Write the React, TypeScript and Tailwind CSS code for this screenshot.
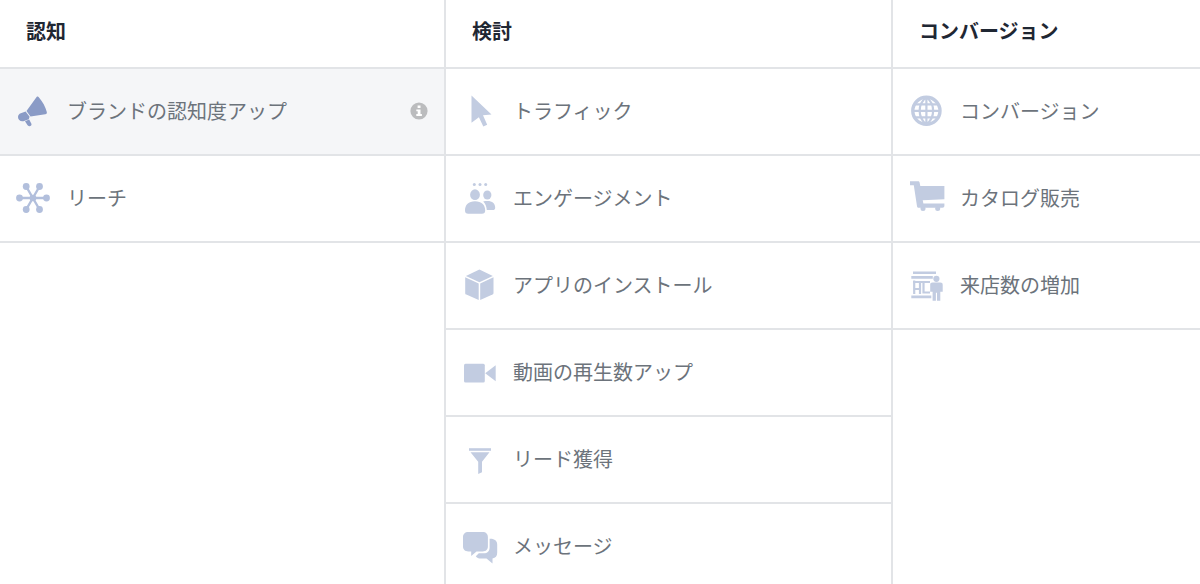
import { useState, type ReactNode } from "react";
import clsx from "clsx";

interface Objective {
  id: string;
  label: string;
  icon: ReactNode;
  hint?: string;
}

interface Column {
  title: string;
  items: Objective[];
}

const megaphone = (
  <>
    <path d="M20.6 3.9c.7-.6 1.6-.5 2.200.3 3.700 4.400 6.800 9.600 8 14.800.3 1.300-.2 2.100-1.500 2.200l-14.800 2.200-4-5.400z" />
    <path d="m9.600 18.400 4 5.300-.8 2.500-5.300 2c-2.900.8-5.500-1.300-5.500-4.100 0-1.900 1.100-3.400 2.800-3.900z" />
    <path d="m9 28.200 4.200-1.600 2.200 4.200c.5 1.400-.6 2.600-2.200 2.500-.8-.1-1.400-.5-1.800-1.200z" />
  </>
);

const hub = (
  <g className="text-[#b2bfdc]" fill="currentColor">
    <path d="M3.5 18h27M10.200 6.500l13.300 23M23.500 6.500l-13.300 23" stroke="currentColor" strokeWidth="2.400" />
    <circle cx="17" cy="18" r="3.300" />
    <circle cx="3.500" cy="18" r="3.400" />
    <circle cx="30.500" cy="18" r="3.400" />
    <circle cx="10.200" cy="6.500" r="3.400" />
    <circle cx="23.500" cy="6.500" r="3.400" />
    <circle cx="10.200" cy="29.500" r="3.400" />
    <circle cx="23.500" cy="29.500" r="3.400" />
  </g>
);

const cursor = <path d="M9.500 2.500 29.500 21.600l-8.500.6 4.200 9.500-3.900 1.800-4.400-9.300-7.400 5.500z" />;

const people = (
  <>
    <circle cx="12.300" cy="4.400" r="1.500" />
    <circle cx="18" cy="4.400" r="1.500" />
    <circle cx="23.700" cy="4.400" r="1.500" />
    <ellipse cx="13" cy="14.700" rx="4.900" ry="5.400" />
    <path d="M3 30.500c0-5.500 3.500-9.200 10-9.200s10.200 3.700 10.200 9.200c0 2.200-1.200 3.200-3.200 3.200H6.200c-2 0-3.200-1-3.200-3.200z" />
    <ellipse cx="25.300" cy="15" rx="4.100" ry="4.500" />
    <path d="M21.200 21.500c1.200-.5 2.600-.6 4.200-.6 5 0 7.800 2.700 7.800 6.800 0 1.700-.9 2.400-2.500 2.400h-5.900c-.3-3.600-1.300-6.600-3.600-8.600z" />
  </>
);

const cube = (
  <>
    <path d="M17.400 2.500 30.800 9 17.400 15.200 3.900 9z" />
    <path d="M3.200 10.300 16.700 16.400v16.700L4.300 27.600c-.8-.4-1.100-.9-1.100-1.700z" />
    <path d="M31.500 10.300 18.200 16.400v16.700L30.500 27.600c.7-.4 1-.9 1-1.700z" />
  </>
);

const video = (
  <>
    <rect x="2" y="9.800" width="20.800" height="18.800" rx="1.500" />
    <path d="m23.200 19.200 10.500-8v16z" />
  </>
);

const funnel = (
  <>
    <path d="M7 7.200h22v2.600H7z" />
    <path d="M8.500 11.300h19l-7.500 9.500v10.400L16.200 33V20.800z" />
  </>
);

const chat = (
  <>
    <path d="M6.300 4h14.400c3.300 0 5.200 2 5.200 5.200v9c0 3.200-1.900 5.200-5.200 5.200h-6.200L9.200 28v-4.600H6.300C3 23.400 1 21.400 1 18.200v-9C1 6 3 4 6.300 4z" />
    <path d="M27.600 10.800c4.900-.3 7.600 2 7.600 5.700v8.200c0 3.300-1.700 5.300-4.700 5.700v5l-6-4.800h-5.700c-2.300 0-4-.9-5-2.400l3-2.900h5c3.600 0 5.800-2.300 5.800-5.900z" />
  </>
);

const globe = (
  <g fill="none" stroke="currentColor">
    <circle cx="17.400" cy="17.800" r="13.600" strokeWidth="3.400" />
    <path
      d="M17.400 4v27.600M4 17.800h26.800M6 11.300h22.800M6 24.300h22.800M17.400 4c-9 7.300-9 20.300 0 27.600M17.400 4c9 7.300 9 20.300 0 27.600"
      strokeWidth="2.200"
    />
  </g>
);

const cart = (
  <>
    <path d="M1 1.300h8c.9 0 1.400.4 1.600 1.300l.7 3.400h24.100v13.200l-21.700 1.100.7 3.200h21v2.200c0 1.300-.7 2-2 2H9.800c-1 0-1.600-.5-1.800-1.500L4.800 5.300H1z" />
    <circle cx="14" cy="28.500" r="2.500" />
    <circle cx="28.700" cy="28.500" r="2.500" />
  </>
);

const store = (
  <>
    <path d="M4 4.600h23v2.500H4zM2.300 9h21.500v2.800H2.300zM2.300 28.600h20v2.600h-20z" />
    <path
      d="M5.200 13.500v13.500M4 15h17M11 15v12M5 22h6M14.500 15v10.500h6.500"
      fill="none"
      stroke="currentColor"
      strokeWidth="2.200"
    />
    <circle cx="27.400" cy="11.800" r="3.100" />
    <path d="M23.500 15.500h7.800c1.600 0 2.400.8 2.400 2.300v7h-2.400v9h-3.300v-8h-1.100v8h-3.300v-9h-2.400v-7c0-1.500.8-2.300 2.300-2.300z" />
  </>
);

const columns: Column[] = [
  {
    title: "認知",
    items: [
      { id: "brand", label: "ブランドの認知度アップ", icon: megaphone, hint: "ブランドの認知度アップの詳細" },
      { id: "reach", label: "リーチ", icon: hub },
    ],
  },
  {
    title: "検討",
    items: [
      { id: "traffic", label: "トラフィック", icon: cursor },
      { id: "engagement", label: "エンゲージメント", icon: people },
      { id: "app", label: "アプリのインストール", icon: cube },
      { id: "video", label: "動画の再生数アップ", icon: video },
      { id: "lead", label: "リード獲得", icon: funnel },
      { id: "message", label: "メッセージ", icon: chat },
    ],
  },
  {
    title: "コンバージョン",
    items: [
      { id: "conversion", label: "コンバージョン", icon: globe },
      { id: "catalog", label: "カタログ販売", icon: cart },
      { id: "store", label: "来店数の増加", icon: store },
    ],
  },
];

function InfoIcon() {
  return (
    <svg viewBox="0 0 18 18" className="size-[18px]" aria-hidden="true">
      <circle cx="9" cy="9" r="8.600" fill="#bbbcbe" />
      <path d="M7.600 3.400h2.900V6H7.600zM6.300 7.500h4.200v4.600h1.400v1.800H6.300v-1.800h1.400V9.300H6.300z" fill="#fff" />
    </svg>
  );
}

interface RowProps {
  item: Objective;
  active: boolean;
  onSelect: () => void;
}

function ObjectiveRow({ item, active, onSelect }: RowProps) {
  return (
    <li
      className={clsx(
        "flex items-center border-b-2 border-[#e2e4e7]",
        active ? "bg-[#f5f6f8]" : "bg-white"
      )}
    >
      <button
        type="button"
        aria-pressed={active}
        onClick={onSelect}
        className="flex h-[85px] min-w-0 flex-1 cursor-pointer items-center gap-[15px] pb-0.5 pl-4 text-left"
      >
        <svg
          viewBox="0 0 36 36"
          fill="currentColor"
          aria-hidden="true"
          className={clsx(
            "size-9 shrink-0",
            active ? "text-[#8a9bc6]" : "text-[#c2cce1]"
          )}
        >
          {item.icon}
        </svg>
        <span className="whitespace-nowrap text-[20px] leading-7 text-[#6c737b]">{item.label}</span>
      </button>
      {item.hint && (
        <button type="button" aria-label={item.hint} className="mr-4 shrink-0 cursor-pointer pb-0.5">
          <InfoIcon />
        </button>
      )}
    </li>
  );
}

export default function App() {
  const [selected, setSelected] = useState("brand");

  return (
    <main className="grid h-screen grid-cols-[446fr_447fr_307fr] overflow-hidden bg-white font-['Noto_Sans_CJK_JP',sans-serif]">
      {columns.map((column) => (
        <section key={column.title} className="min-w-0 border-r-2 border-[#e2e4e7] last:border-r-0">
          <h2 className="flex h-[69px] items-center border-b-2 border-[#e2e4e7] pb-1.5 pl-[26px] text-[20px] leading-7 font-bold text-[#1f2733]">
            {column.title}
          </h2>
          <ul>
            {column.items.map((item) => (
              <ObjectiveRow
                key={item.id}
                item={item}
                active={item.id === selected}
                onSelect={() => setSelected(item.id)}
              />
            ))}
          </ul>
        </section>
      ))}
    </main>
  );
}
